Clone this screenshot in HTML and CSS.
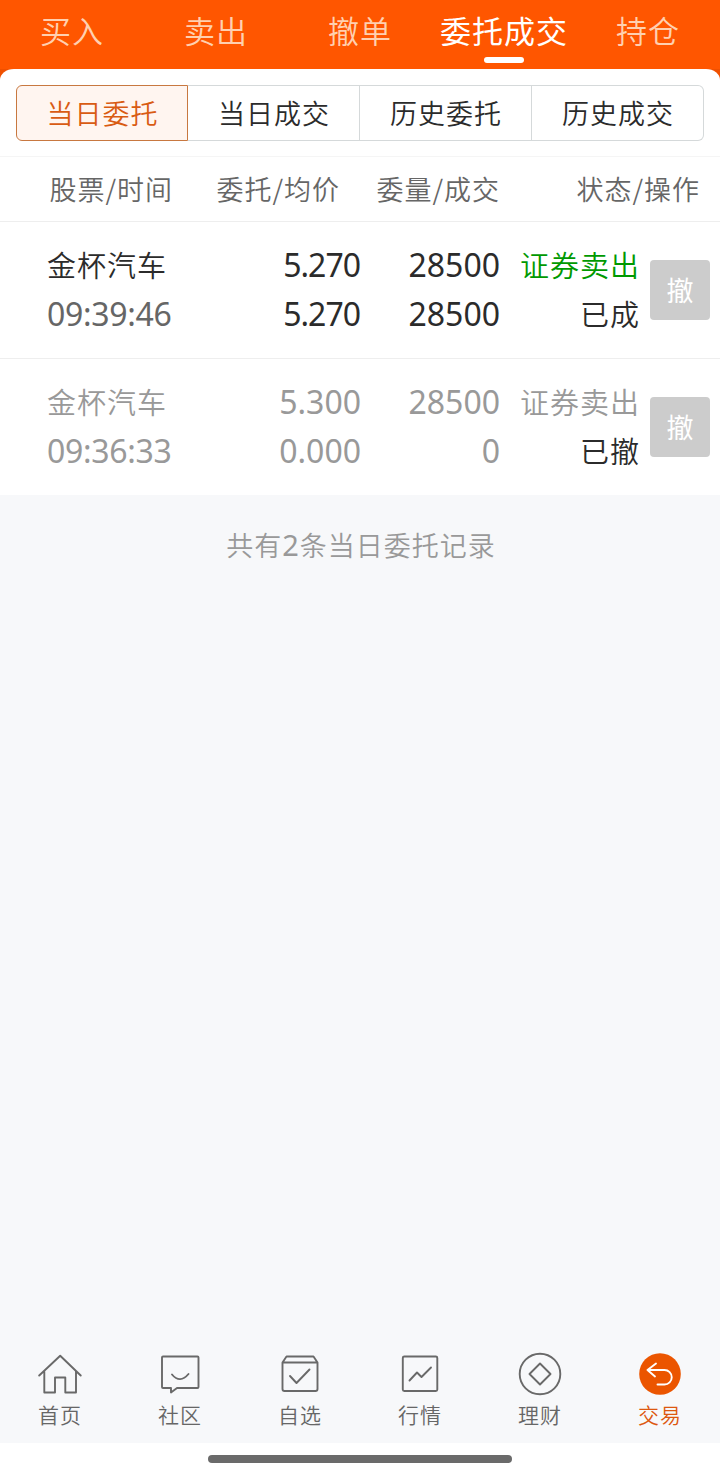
FILE: index.html
```html
<!DOCTYPE html>
<html lang="zh-CN">
<head>
<meta charset="utf-8">
<title>委托成交</title>
<link rel="stylesheet" href="styles.css">
</head>
<body>
<div class="app">
  <header class="top">
    <nav class="tabs">
      <a class="tab">买入</a>
      <a class="tab">卖出</a>
      <a class="tab">撤单</a>
      <a class="tab tab-active">委托成交</a>
      <a class="tab">持仓</a>
    </nav>
  </header>
  <main class="content">
    <div class="sheet-wrap">
      <div class="sheet">
        <div class="segments">
          <button class="seg seg-active">当日委托</button>
          <button class="seg">当日成交</button>
          <button class="seg">历史委托</button>
          <button class="seg">历史成交</button>
        </div>
      </div>
    </div>
    <div class="thead">
      <span>股票/时间</span><span>委托/均价</span><span>委量/成交</span><span>状态/操作</span>
    </div>
    <section class="order">
      <div class="cell name"><span>金杯汽车</span><span class="num time muted">09:39:46</span></div>
      <div class="cell num"><span class="tight">5.270</span><span class="tight">5.270</span></div>
      <div class="cell num"><span>28500</span><span>28500</span></div>
      <div class="cell status"><span class="sell">证券卖出</span><span>已成</span></div>
      <button class="cancel">撤</button>
    </section>
    <section class="order order-off">
      <div class="cell name"><span>金杯汽车</span><span class="num time">09:36:33</span></div>
      <div class="cell num"><span>5.300</span><span>0.000</span></div>
      <div class="cell num"><span>28500</span><span>0</span></div>
      <div class="cell status"><span>证券卖出</span><span class="done">已撤</span></div>
      <button class="cancel">撤</button>
    </section>
    <p class="summary">共有<span class="digit">2</span>条当日委托记录</p>
  </main>
  <nav class="bottom">
    <a class="item">
      <svg class="icon" viewBox="0 0 44 44"><path d="M1.200 23.500 22.200 3.700 42.700 23.500M6.300 19.500V40.500H17V25.500H27.300V40.500H38V19.500"/></svg>
      <span>首页</span>
    </a>
    <a class="item">
      <svg class="icon" viewBox="0 0 44 44"><path d="M5 4.500H39.500Q40.500 4.500 40.500 5.500V35Q40.500 36 39.500 36H19L13 40.500V36H5Q4 36 4 35V5.500Q4 4.500 5 4.500ZM14 22.500Q22 32 30.500 22"/></svg>
      <span>社区</span>
    </a>
    <a class="item">
      <svg class="icon" viewBox="0 0 44 44"><path d="M8.500 4.500H35.500L39.500 10.500V37Q39.500 39 37.500 39H6.500Q4.500 39 4.500 37V10.500ZM4.500 10.500H39.500M12 24 18.500 31 31.500 17.500"/></svg>
      <span>自选</span>
    </a>
    <a class="item">
      <svg class="icon" viewBox="0 0 44 44"><rect x="4.800" y="4.500" width="34.500" height="34.500" rx="1.500"/><path d="M11.500 28.500 19 20.500 23.500 25 33 15.500"/></svg>
      <span>行情</span>
    </a>
    <a class="item">
      <svg class="icon" viewBox="0 0 44 44"><circle cx="22" cy="22" r="20.300"/><path d="M22 11.500 32.500 22 22 32.500 11.500 22Z"/></svg>
      <span>理财</span>
    </a>
    <a class="item item-active">
      <svg class="icon" viewBox="0 0 44 44"><circle class="disc" cx="22" cy="22" r="20.800"/><path class="arrow" d="M18 11.500 9.500 18 17 24.500M9.500 18H26.500A7.200 7.200 0 0 1 26.500 32.500H19.500"/></svg>
      <span>交易</span>
    </a>
  </nav>
  <footer class="gesture"><div class="handle"></div></footer>
</div>
</body>
</html>
```
FILE: styles.css
```css
* { box-sizing: border-box; }
body {
  margin: 0;
  color: #2b2b2b;
  font-family: "Noto Sans CJK SC", sans-serif;
  font-weight: 350;
}
button { font: inherit; padding: 0; border: 0; }
.app { width: 720px; height: 1474px; display: flex; flex-direction: column; background: #f7f8fa; }
.top { height: 69px; flex: none; background: #ff5600; }
.tabs { display: grid; grid-template-columns: repeat(5, 1fr); }
.tab {
  height: 63px;
  display: flex;
  flex-direction: column;
  align-items: center;
  white-space: nowrap;
  color: #ffd0b0;
  font-size: 31px;
  letter-spacing: 1px;
  line-height: 55px;
  padding-top: 2px;
}
.tab-active { color: #fff; font-weight: 400; }
.tab-active::after { content: ""; width: 40px; height: 6px; flex: none; border-radius: 3px; background: #fff; }
.content { flex: 1; }
.sheet-wrap { background: #f05000; }
.sheet { height: 88px; padding: 16px; background: #fff; border-radius: 14px 14px 0 0 / 11px 11px 0 0; border-bottom: 1px solid #f5f5f5; }
.segments { display: grid; grid-template-columns: repeat(4, 1fr); height: 56px; }
.seg {
  background: #fff;
  border: 1px solid #d5d9da;
  color: inherit;
  font-size: 27px;
  letter-spacing: 1px;
  line-height: 54px;
  padding-left: 1px;
}
.seg + .seg { border-left-width: 0; }
.seg:last-child { border-radius: 0 6px 6px 0; }
.seg-active { border-color: #c87840; border-radius: 6px 0 0 6px; background: #fff5f0; color: #d95b13; }
.thead {
  height: 65px;
  display: grid;
  grid-template-columns: 173px 167px 160px 200px;
  text-align: right;
  background: #fff;
  border-bottom: 1px solid #eee;
  color: #666;
  font-size: 27px;
  letter-spacing: 1px;
  line-height: 64px;
}
.order {
  height: 137px;
  display: grid;
  grid-template-columns: 155px 159px 139px 150px 60px;
  padding: 19px 10px 0 47px;
  background: #fff;
  border-bottom: 1px solid #eee;
}
.cell { display: flex; flex-direction: column; text-align: right; font-size: 29px; letter-spacing: 1px; line-height: 49px; }
.name { text-align: left; }
.status { padding-right: 10px; margin-top: -1px; }
.name > :first-child { margin-top: -1px; margin-bottom: 1px; }
.num { font-family: "Noto Sans", "Noto Sans CJK SC", sans-serif; font-weight: 400; font-size: 32px; letter-spacing: 0; }
.cell.num { margin-top: -1px; }
.time { letter-spacing: -0.3px; margin-top: -1px; }
.tight { letter-spacing: -1px; padding-right: 1px; }
.muted { color: #666; }
.sell { color: #090; }
.order-off { color: #999; border-bottom: 0; height: 136px; }
.done { color: #2b2b2b; }
.cancel {
  width: 60px;
  height: 60px;
  margin-top: 19px;
  border-radius: 4px;
  background: #ccc;
  color: #fff;
  font-size: 27px;
  font-weight: 400;
  line-height: 60px;
}
.summary { margin: 30px 0 0; padding-left: 2px; text-align: center; color: #999; font-size: 27px; letter-spacing: 1px; line-height: 40px; }
.digit { font-family: "Noto Sans", sans-serif; font-weight: 400; font-size: 29px; line-height: 1; }
.bottom { height: 103px; flex: none; display: grid; grid-template-columns: repeat(6, 1fr); padding-top: 12px; }
.item { display: flex; flex-direction: column; align-items: center; color: #666; font-size: 21px; letter-spacing: 1px; line-height: 34px; }
.item-active { color: #dd5810; }
.icon { width: 44px; height: 44px; margin-bottom: 1px; fill: none; stroke: #696969; stroke-width: 1.9; stroke-linejoin: round; stroke-linecap: round; }
.disc { fill: #eb5500; stroke: none; }
.arrow { stroke: #fff; }
.gesture { height: 31px; flex: none; background: #fff; padding-top: 12px; }
.handle { width: 304px; height: 8px; margin: 0 auto; border-radius: 4px; background: #6a6a6a; }
```
